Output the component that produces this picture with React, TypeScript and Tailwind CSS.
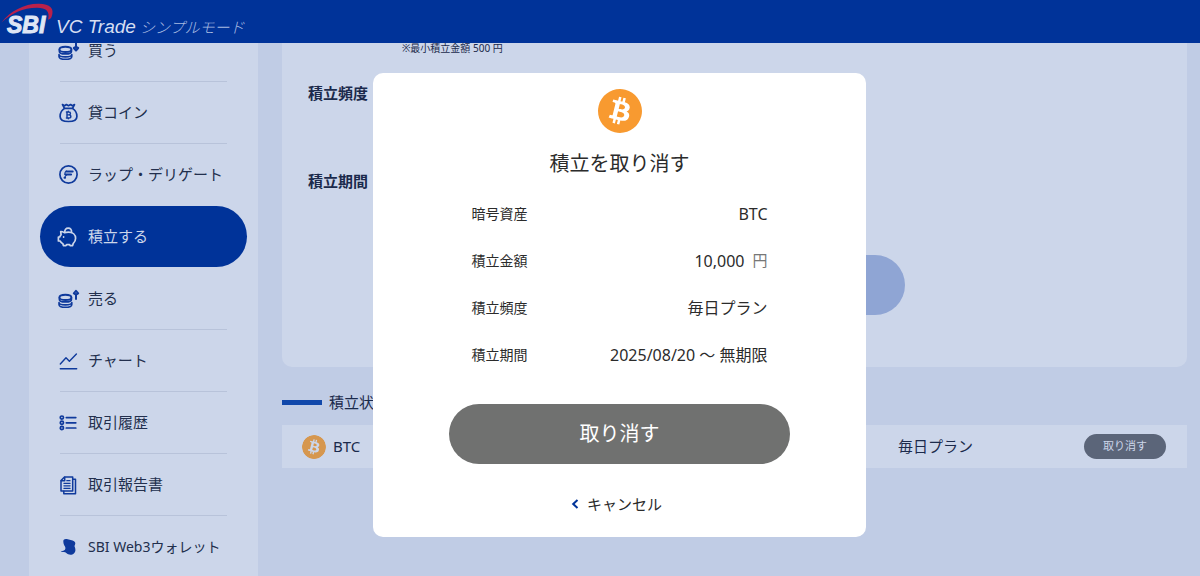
import type { ReactNode } from "react";
import { SiBitcoin } from "react-icons/si";

function Icon({ children }: { children: ReactNode }) {
  return (
    <svg
      viewBox="0 0 24 24"
      className="size-6 shrink-0"
      fill="none"
      stroke="currentColor"
      strokeWidth="1.7"
      strokeLinecap="round"
      strokeLinejoin="round"
      aria-hidden="true"
    >
      {children}
    </svg>
  );
}

function CoinStack() {
  return (
    <>
      <ellipse cx="9.4" cy="10.4" rx="6" ry="2.6" strokeWidth="1.9" />
      <path d="M3.4 10.800v1.600c0 1.500 2.700 2.500 6 2.500s6-1 6-2.500v-1.600" />
      <path d="M3 15.600c0 1.400 2.600 2.300 6.400 2.300s6.400-.9 6.400-2.300v1.800c0 1.600-2.800 2.900-6.400 2.900S3 19 3 17.400z" strokeWidth="1.600" />
    </>
  );
}

const BuyIcon = () => (
  <Icon>
    <CoinStack />
    <g strokeWidth="2">
      <path d="M20 3v5" />
      <path d="M20 11.500l-2.200-2.500 2.200-1.200 2.200 1.200z" />
    </g>
  </Icon>
);

const SellIcon = () => (
  <Icon>
    <CoinStack />
    <g strokeWidth="2">
      <path d="M20 7.500v4.500" />
      <path d="M20 3.800l-2.200 2.500 2.200 1.200 2.200-1.200z" />
    </g>
  </Icon>
);

const BagIcon = () => (
  <Icon>
    <path d="M8.500 7.300L6.500 3.600l2.100 1.100 1.800-1.200 2.100 1.200 2.100-1.200 1.800 1.200 2.100-1.100-2 3.700z" />
    <path d="M8.500 7.400c-2.600 1.600-4.400 5-4.400 8 0 3.300 2.700 5.100 8.400 5.100s8.400-1.800 8.400-5.100c0-3-1.800-6.400-4.400-8" />
    <path
      d="M11 11v6M10.400 11h2.500c2.100 0 2.100 2.900 0 2.900h-2M12.900 13.900c2.600 0 2.600 3.100 0 3.100h-2.500M12.300 10.200v.8M12.300 17v.8"
      strokeWidth="1.400"
    />
  </Icon>
);

const WrapIcon = () => (
  <Icon>
    <circle cx="12.500" cy="11.500" r="8.600" />
    <path d="M10.500 8.500h6.200M9.500 11.600h5.600M8.500 14.700h.6" strokeWidth="2" />
    <path d="M10.300 8c-1.200.8-1.500 1.800-1.500 3.300M10.500 12c-.8.600-1.300 1.200-1.600 2.200" strokeWidth="1.200" />
  </Icon>
);

const PigIcon = () => (
  <Icon>
    <g transform="translate(0 -1)">
      <path d="M8.300 8.600C7 7.800 5.900 7.400 4.700 7.500l.4 3.300c-.7.800-1.100 1.400-1.400 2.200H2.400v4h1.700c.7 1.200 1.600 2.100 2.800 2.700l.5 1.900h2.600l.6-1h3l.5 1h2.500l.7-2.300c1.500-1.300 2.300-3 2.300-5 0-3.600-2.900-6.200-7.100-6.200-1.500 0-2.900.2-4.200.5z" />
      <path d="M8.800 8.300C8.600 5.600 10 4.200 12.200 4.200s3.700 1.500 3.300 4.300" />
      <path d="M7.600 12.900v.2" />
    </g>
  </Icon>
);

const ChartIcon = () => (
  <Icon>
    <path d="M4.300 15l5.700-6.200 3.400 3.400L20.400 5M4.300 19.800h16.400" strokeWidth="1.400" />
  </Icon>
);

const ListIcon = () => (
  <Icon>
    <circle cx="5.900" cy="6.600" r="1.600" />
    <circle cx="5.900" cy="11.800" r="1.600" />
    <circle cx="5.900" cy="17" r="1.600" />
    <path d="M10.300 6.600h9.500M10.300 11.800h9.500M10.300 17h9.500" />
  </Icon>
);

const ReportIcon = () => (
  <Icon>
    <path d="M8.500 3.900h8.200v14H5V7.500z" strokeWidth="1.500" />
    <path d="M8.700 4.200v3.500H5.200M17.200 6.300h2.300v14.400H7.800v-2.400" strokeWidth="1.500" />
    <path d="M10.800 7.700h3.200M7.900 10.300h6.200M7.900 12.800h6.200M7.900 15.300h6.200" strokeWidth="1.200" />
  </Icon>
);

const WalletIcon = () => (
  <Icon>
    <path
      d="M7.300 6.300C7.200 4.500 9 3.700 10.800 4.100l5.800 1.500c2.300.6 3.400 2.700 2.300 4.400-.5.900-.4 1.300 0 2.300.8 2.200.8 4.600-.8 6-2.300 2.200-5.700 1.800-7.800-.2-.8-.8-1.700-1.300-3-1.100-1 .1-2-.2-2.600-.9 2.600-.1 4.500-.9 4.700-2.700.1-1.300-.5-2.100-1.200-3.200-.7-1.200-.9-2.500-.9-3.900z"
      fill="currentColor"
      stroke="none"
    />
  </Icon>
);

type NavItem = { label: string; icon: ReactNode; active?: boolean; divider?: boolean; compact?: boolean };

const navItems: NavItem[] = [
  { label: "買う", icon: <BuyIcon />, divider: true },
  { label: "貸コイン", icon: <BagIcon />, divider: true },
  { label: "ラップ・デリゲート", icon: <WrapIcon /> },
  { label: "積立する", icon: <PigIcon />, active: true },
  { label: "売る", icon: <SellIcon />, divider: true },
  { label: "チャート", icon: <ChartIcon />, divider: true },
  { label: "取引履歴", icon: <ListIcon />, divider: true },
  { label: "取引報告書", icon: <ReportIcon />, divider: true },
  { label: "SBI Web3ウォレット", icon: <WalletIcon />, compact: true },
];

const details: { label: string; value: string; unit?: string }[] = [
  { label: "暗号資産", value: "BTC" },
  { label: "積立金額", value: "10,000", unit: "円" },
  { label: "積立頻度", value: "毎日プラン" },
  { label: "積立期間", value: "2025/08/20 ～ 無期限" },
];

function Header() {
  return (
    <header className="relative z-10 flex h-[43px] shrink-0 items-end bg-[#003399] pb-[2px] pl-[7px] italic">
      <div className="relative w-[49px] pb-[2px] font-['Liberation_Sans',sans-serif] text-[23px] leading-7 font-bold text-[#dfe6f5]">
        <span className="[-webkit-text-stroke:1px_#dfe6f5]">SBI</span>
        <svg viewBox="0 0 54 22" className="absolute -top-2 -left-[6px] h-[22px] w-[54px]" aria-hidden="true">
          <path
            d="M.5 19.500C9 8 24 .5 38 .8c11 .2 16 4.700 12.500 13.200-.6 1.300-1.800 2.300-3.500 2.700C49.300 8 45 4.700 36 4.700 22 4.700 10 10.500.5 19.500z"
            fill="#b9214b"
          />
        </svg>
      </div>
      <div className="flex items-baseline gap-1">
        <span className="font-['Liberation_Sans',sans-serif] text-[19px] leading-7 text-[#d6dff2]">VC Trade</span>
        <span className="text-[15px] leading-5 font-light text-[#a9bce2]">シンプルモード</span>
      </div>
    </header>
  );
}

function Sidebar() {
  return (
    <nav className="w-[229px] shrink-0 bg-[#ccd6ea] px-[11px] pt-px">
      <ul>
        {navItems.map((item) => (
          <li key={item.label}>
            <a
              href="#"
              className={
                item.active
                  ? "flex h-[61px] items-center gap-2 rounded-full bg-[#003399] px-4 text-[15px] text-[#ccd6ea]"
                  : "flex h-[61px] items-center gap-2 px-4 text-[15px] text-[#222f4d]"
              }
            >
              <span className={item.active ? "text-[#ccd6ea]" : "text-[#0f3a9c]"}>{item.icon}</span>
              <span className={item.compact ? "text-sm" : undefined}>{item.label}</span>
            </a>
            <div className={item.divider ? "mx-5 h-px bg-[#b8c3da]" : "mx-5 h-px"} />
          </li>
        ))}
      </ul>
    </nav>
  );
}

function Content() {
  return (
    <main className="min-w-0 flex-1 text-[15px] text-[#1b2a4c]">
      <section className="rounded-b-[10px] bg-[#ccd6ea] px-[26px] pt-[19px] pb-[52px]">
        <p className="ml-[94px] text-[10px] leading-5">※最小積立金額 500 円</p>
        <h2 className="mt-[23px] text-[15px] leading-6 font-bold">積立頻度</h2>
        <h2 className="mt-16 text-[15px] leading-6 font-bold">積立期間</h2>
        <button
          type="button"
          aria-label="積立設定"
          className="mx-auto mt-[62px] block h-[60px] w-[341px] rounded-full bg-[#8fa5d4]"
        />
      </section>
      <h2 className="mt-[23px] flex items-center gap-[7px] leading-6">
        <span className="h-[5px] w-10 bg-[#1148ab]" />
        積立状況
      </h2>
      <table className="mt-[11px] w-full bg-[#ccd6ea]">
        <tbody>
          <tr className="h-[43px]">
            <td className="pl-5">
              <span className="flex items-center gap-[7px]">
                <SiBitcoin className="size-6 rounded-full bg-[#ccd6ea] text-[#d6974f]" />
                BTC
              </span>
            </td>
            <td className="w-[186px]">毎日プラン</td>
            <td className="w-[103px] pr-[21px]">
              <button
                type="button"
                className="block h-[25px] w-full rounded-full bg-[#5b6579] text-[11px] text-[#ccd6ea]"
              >
                取り消す
              </button>
            </td>
          </tr>
        </tbody>
      </table>
    </main>
  );
}

function CancelDialog() {
  return (
    <div className="fixed inset-0 z-20 flex items-start justify-center pt-[73px] pl-[39px]">
      <div
        role="dialog"
        aria-modal="true"
        aria-labelledby="dialog-title"
        className="flex w-[493px] max-w-full flex-col items-center rounded-[10px] bg-white pt-4 pb-[21px] text-[#2b2b2b]"
      >
        <SiBitcoin className="size-11 text-[#f89a30]" />
        <h1 id="dialog-title" className="mt-4 text-xl leading-[30px]">
          積立を取り消す
        </h1>
        <dl className="mt-[11px] w-[296px]">
          {details.map((row) => (
            <div key={row.label} className="flex h-[47px] items-center justify-between">
              <dt className="text-sm">{row.label}</dt>
              <dd className="flex items-center gap-2 text-base">
                {row.value}
                {row.unit && <span className="text-[15px] text-[#777777]">{row.unit}</span>}
              </dd>
            </div>
          ))}
        </dl>
        <button type="button" className="mt-[26px] h-[60px] w-[341px] rounded-full bg-[#707170] text-xl text-white">
          取り消す
        </button>
        <button type="button" className="mt-7 flex h-6 items-center gap-2 pr-[6px] text-[15px]">
          <svg viewBox="0 0 8 10" className="h-[10px] w-2" fill="none" stroke="#003399" strokeWidth="2" aria-hidden="true">
            <path d="M6.500 1L2.200 5l4.300 4" />
          </svg>
          キャンセル
        </button>
      </div>
    </div>
  );
}

export default function App() {
  return (
    <div className="flex h-screen flex-col overflow-hidden bg-[#c0cce5] font-['Noto_Sans','Noto_Sans_CJK_JP',sans-serif]" lang="ja">
      <Header />
      <div className="-mt-6 flex min-h-0 flex-1 gap-6 pr-[13px] pl-[29px]">
        <Sidebar />
        <Content />
      </div>
      <CancelDialog />
    </div>
  );
}
